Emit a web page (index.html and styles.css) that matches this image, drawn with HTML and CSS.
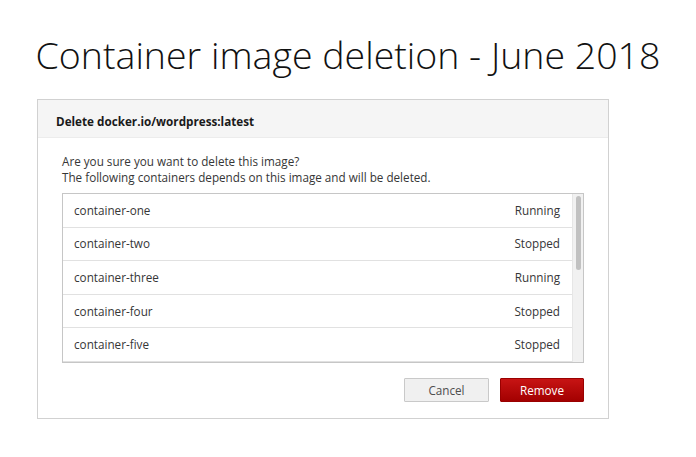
FILE: index.html
```html
<!DOCTYPE html>
<html lang="en">
<head>
<meta charset="utf-8">
<title>Container image deletion - June 2018</title>
<link rel="stylesheet" href="styles.css">
</head>
<body>
<h1 class="page-title">Container image deletion - June 2018</h1>
<div class="modal">
  <div class="modal-header">Delete docker.io/wordpress:latest</div>
  <div class="modal-body">
    <p class="message">Are you sure you want to delete this image?<br>The following containers depends on this image and will be deleted.</p>
    <div class="list-box">
      <ul class="container-list">
        <li class="row"><span>container-one</span><span>Running</span></li>
        <li class="row"><span>container-two</span><span>Stopped</span></li>
        <li class="row"><span>container-three</span><span>Running</span></li>
        <li class="row"><span>container-four</span><span>Stopped</span></li>
        <li class="row"><span>container-five</span><span>Stopped</span></li>
      </ul>
      <div class="scrollbar"><div class="thumb"></div></div>
    </div>
    <div class="actions">
      <button class="btn btn-cancel">Cancel</button>
      <button class="btn btn-remove">Remove</button>
    </div>
  </div>
</div>
</body>
</html>
```
FILE: styles.css
```css
* { box-sizing: border-box; }
html, body { margin: 0; padding: 0; background: #fff; }
body {
  font-family: "Open Sans", "Liberation Sans", sans-serif;
  color: #363636;
  width: 696px;
  height: 457px;
  overflow: hidden;
}
.page-title {
  margin: 0;
  padding-top: 29px;
  font-size: 37.5px;
  font-weight: 300;
  line-height: 51px;
  text-align: center;
  color: #111;
}
.modal {
  margin: 19px 0 0 37px;
  width: 572px;
  border: 1px solid #d1d1d1;
  background: #fff;
}
.modal-header {
  background: #f5f5f5;
  border-bottom: 1px solid #ececec;
  padding: 13px 18px 8px;
  font-size: 11.7px;
  font-weight: 700;
  line-height: 16px;
  color: #1a1a1a;
}
.modal-body {
  padding: 15px 24px 16px 24px;
}
.message {
  margin: 0 0 8px 0;
  font-size: 11.7px;
  line-height: 16px;
  color: #363636;
}
.list-box {
  display: flex;
  height: 170px;
  border: 1px solid #c6c6c6;
  overflow: hidden;
}
.container-list {
  flex: 1;
  list-style: none;
  margin: 0;
  padding: 0;
  overflow: hidden;
}
.scrollbar {
  width: 11px;
  flex: none;
  background: #f1f1f1;
  border-left: 1px solid #e6e6e6;
  padding: 2px 2px 0 3px;
}
.thumb {
  width: 5px;
  height: 74px;
  background: #c1c1c1;
  border-radius: 3px;
}
.row {
  display: flex;
  justify-content: space-between;
  align-items: center;
  height: 33.6px;
  padding: 0 12px 1px 11px;
  border-bottom: 1px solid #e1e1e1;
  font-size: 11.7px;
  color: #363636;
}
.actions {
  display: flex;
  justify-content: flex-end;
  gap: 11px;
  margin-top: 15px;
}
.btn {
  font-family: "Open Sans", "Liberation Sans", sans-serif;
  font-size: 11.7px;
  line-height: 16px;
  height: 24px;
  width: 85px;
  padding: 0;
  border-radius: 1px;
  cursor: pointer;
}
.btn-cancel {
  background: #f0f0f0;
  border: 1px solid #c9c9c9;
  color: #4d4d4d;
}
.btn-remove {
  width: 84px;
  background: linear-gradient(#c71414, #a30000);
  border: 1px solid #9a0000;
  color: #fff;
}
```
